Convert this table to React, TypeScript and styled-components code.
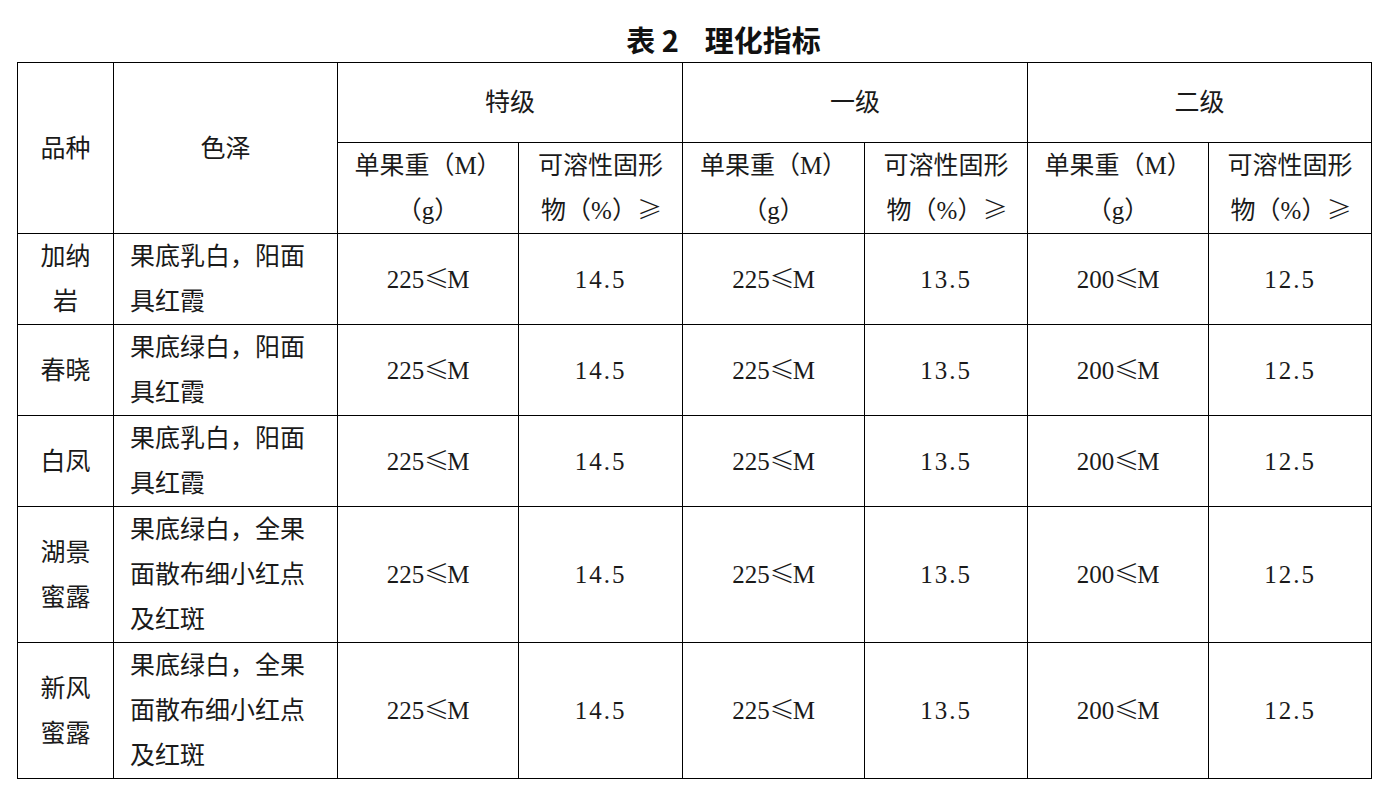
import styled, { createGlobalStyle } from 'styled-components';

type CellPropsType = {
    align?: 'left' | 'center';
    spaced?: boolean;
};

type RowPropsType = {
    height?: string;
};

type GradeType = {
    weight: string;
    solid: string;
};

type VarietyType = {
    name: string[];
    color: string[];
    grades: GradeType[];
};

const GlobalStyle = createGlobalStyle`
    body {
        margin: 0;
        background: #ffffff;
    }
`;

const colWidths = [96, 224, 181, 164, 182, 163, 181, 163];
const gradeNames = ['特级', '一级', '二级'];

const milkyRed = ['果底乳白，阳面', '具红霞'];
const greenRed = ['果底绿白，阳面', '具红霞'];
const greenDots = ['果底绿白，全果', '面散布细小红点', '及红斑'];

const standardGrades: GradeType[] = [
    { weight: '225', solid: '14.5' },
    { weight: '225', solid: '13.5' },
    { weight: '200', solid: '12.5' },
];

const varieties: VarietyType[] = [
    { name: ['加纳', '岩'], color: milkyRed, grades: standardGrades },
    { name: ['春晓'], color: greenRed, grades: standardGrades },
    { name: ['白凤'], color: milkyRed, grades: standardGrades },
    { name: ['湖景', '蜜露'], color: greenDots, grades: standardGrades },
    { name: ['新风', '蜜露'], color: greenDots, grades: standardGrades },
];

function Lines({ items }: { items: string[] }) {
    return (
        <>
            {items.map((line, i) => (
                <span key={i}>
                    {line}
                    {i < items.length - 1 && <br />}
                </span>
            ))}
        </>
    );
}

function App() {
    return (
        <Page>
            <GlobalStyle />
            <Title>
                <span>表 2</span>
                <TitleText>理化指标</TitleText>
            </Title>
            <Table>
                <colgroup>
                    {colWidths.map((w, i) => (
                        <col key={i} style={{ width: `${w}px` }} />
                    ))}
                </colgroup>
                <thead>
                    <Row height={'80px'}>
                        <Head rowSpan={2}>品种</Head>
                        <Head rowSpan={2}>色泽</Head>
                        {gradeNames.map((g) => (
                            <Head key={g} colSpan={2}>
                                {g}
                            </Head>
                        ))}
                    </Row>
                    <Row>
                        {gradeNames.map((g) => [
                            <Head key={g + 'w'}>
                                单果重（M）
                                <br />（g）
                            </Head>,
                            <Head key={g + 's'}>
                                可溶性固形
                                <br />
                                物（%）<Symbol>≥</Symbol>
                            </Head>,
                        ])}
                    </Row>
                </thead>
                <tbody>
                    {varieties.map((v, i) => (
                        <Row key={i}>
                            <Cell>
                                <Lines items={v.name} />
                            </Cell>
                            <Cell align={'left'}>
                                <Lines items={v.color} />
                            </Cell>
                            {v.grades.map((g, j) => [
                                <Cell key={j + 'w'}>
                                    {g.weight}
                                    <Symbol>≤</Symbol>M
                                </Cell>,
                                <Cell key={j + 's'} spaced>
                                    {g.solid}
                                </Cell>,
                            ])}
                        </Row>
                    ))}
                </tbody>
            </Table>
        </Page>
    );
}

export default App;

const Page = styled.div`
    width: 1392px;
    padding-left: 17px;
    box-sizing: border-box;
`;

const Title = styled.h1`
    margin: 0;
    height: 62px;
    padding-top: 17px;
    padding-left: 58px;
    box-sizing: border-box;
    width: 1355px;
    display: flex;
    justify-content: center;
    align-items: center;
    font-family: 'Noto Sans CJK SC', 'Noto Sans', sans-serif;
    font-size: 29px;
    font-weight: 700;
    line-height: 1;
    color: #111111;
`;

const TitleText = styled.span`
    margin-left: 26px;
`;

const Table = styled.table`
    width: 1355px;
    table-layout: fixed;
    border-collapse: collapse;
    border: 1px solid #000000;
    font-family: 'Liberation Serif', 'Noto Sans CJK SC', serif;
    font-size: 25px;
    line-height: 45px;
    color: #1a1a1a;
`;

const Row = styled.tr<RowPropsType>`
    height: ${(props) => props.height || 'auto'};
`;

const Head = styled.th`
    border: 1px solid #000000;
    padding: 0;
    font-weight: 400;
    text-align: center;
    vertical-align: middle;
`;

const Cell = styled.td<CellPropsType>`
    border: 1px solid #000000;
    padding: ${(props) => (props.align === 'left' ? '0 0 0 16px' : '0')};
    text-align: ${(props) => props.align || 'center'};
    vertical-align: middle;
    white-space: nowrap;
    letter-spacing: ${(props) => (props.spaced ? '2px' : '0')};
`;

const Symbol = styled.span`
    font-family: 'Noto Sans CJK SC', sans-serif;
    font-weight: 300;
    line-height: 1;
    letter-spacing: -2px;
`;
